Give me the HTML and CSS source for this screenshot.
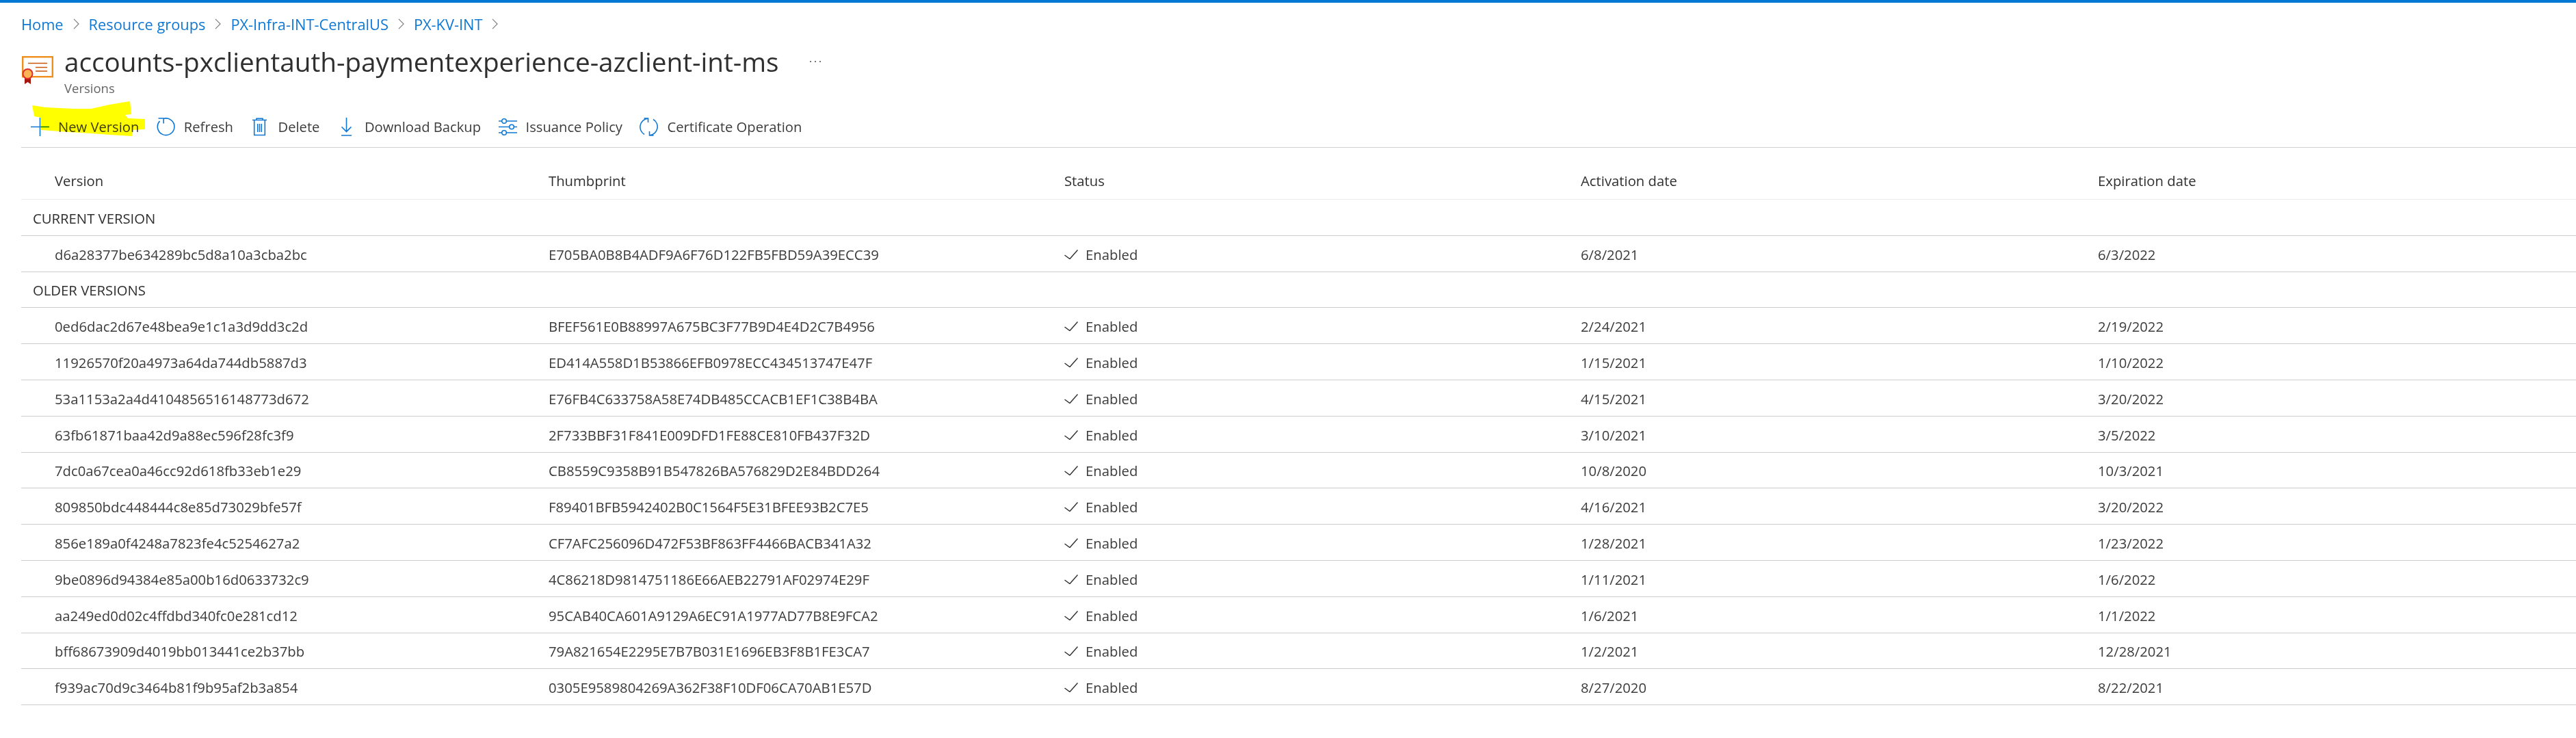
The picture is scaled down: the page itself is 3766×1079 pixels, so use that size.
FILE: index.html
```html
<!DOCTYPE html>
<html lang="en">
<head>
    <meta charset="UTF-8">
    <title>accounts-pxclientauth-paymentexperience-azclient-int-ms - Versions</title>
    <link rel="stylesheet" href="styles.css">
</head>
<body>
    <div class="top-bar"></div>

    <nav class="breadcrumb">
        <a class="crumb">Home</a>
        <svg class="crumb-sep" viewBox="0 0 10 18"><path d="M1 1l8 8-8 8"/></svg>
        <a class="crumb">Resource groups</a>
        <svg class="crumb-sep" viewBox="0 0 10 18"><path d="M1 1l8 8-8 8"/></svg>
        <a class="crumb">PX-Infra-INT-CentralUS</a>
        <svg class="crumb-sep" viewBox="0 0 10 18"><path d="M1 1l8 8-8 8"/></svg>
        <a class="crumb">PX-KV-INT</a>
        <svg class="crumb-sep" viewBox="0 0 10 18"><path d="M1 1l8 8-8 8"/></svg>
    </nav>

    <header class="page-header">
        <svg class="cert-icon" viewBox="0 0 46 42">
            <rect x="1.2" y="1.2" width="43.6" height="29" fill="#fff" stroke="#ee8f1e" stroke-width="2.4"/>
            <path d="M9 10.5h28M20 16.5h17M20 22h17" stroke="#c9560f" stroke-width="1.4" fill="none"/>
            <path d="M4 31v10l4.500-3 4.500 3v-10z" fill="#a8170f"/>
            <circle cx="8.500" cy="26" r="7" fill="#fbb454" stroke="#e0302a" stroke-width="2"/>
        </svg>
        <div class="title-block">
            <div class="title-row">
                <h1 class="page-title">accounts-pxclientauth-paymentexperience-azclient-int-ms</h1>
                <svg class="more-icon" viewBox="0 0 18 4"><circle cx="2" cy="2" r="1.100"/><circle cx="9" cy="2" r="1.100"/><circle cx="16" cy="2" r="1.100"/></svg>
            </div>
            <div class="page-subtitle">Versions</div>
        </div>
    </header>

    <div class="toolbar">
        <div class="tool">
            <svg class="tool-icon" viewBox="0 0 27 27"><path d="M0 13.500h27M13.500 0v27"/></svg>
            <span>New Version</span>
        </div>
        <div class="tool">
            <svg class="tool-icon" viewBox="0 0 27 27"><path d="M10 1.500A12.300 12.300 0 1 1 4.500 5M2.500 1h7.700v7.500"/></svg>
            <span>Refresh</span>
        </div>
        <div class="tool">
            <svg class="tool-icon" viewBox="0 0 27 27"><path d="M3 3.500h21M9 3.500V1.200h9v2.300M5.700 3.500v22h15.600v-22M10.700 9v12M13.500 9v12M16.300 9v12"/></svg>
            <span>Delete</span>
        </div>
        <div class="tool">
            <svg class="tool-icon" viewBox="0 0 27 27"><path d="M13.500 0v20.500M6.500 13.500l7 7 7-7M6 26h15"/></svg>
            <span>Download Backup</span>
        </div>
        <div class="tool">
            <svg class="tool-icon" viewBox="0 0 27 27"><path d="M0 5h4.500M11.500 5H27M0 13.500h15.500M22.500 13.500H27M0 22h4.500M11.500 22H27"/><circle cx="8" cy="5" r="3.300"/><circle cx="19" cy="13.500" r="3.300"/><circle cx="8" cy="22" r="3.300"/></svg>
            <span>Issuance Policy</span>
        </div>
        <div class="tool">
            <svg class="tool-icon" viewBox="0 0 27 27"><path d="M7 24.500A12.500 12.500 0 0 1 12 1.300M6.500 1h6v6M20 2.500A12.500 12.500 0 0 1 15 25.700M20.500 26h-6v-6"/></svg>
            <span>Certificate Operation</span>
        </div>
        <!-- 黄色のマーカー -->
        <svg class="marker" viewBox="0 0 170 55"><polygon points="0,6 20,9 60,11 86,11 113,5 143,0 145,19 136,20 140,25 165,26 165,41 147,42 146,51 113,49 86,47 53,45 13,42 13,24 3,22"/></svg>
    </div>

    <div class="version-table">
        <div class="table-head">
            <div>Version</div><div>Thumbprint</div><div>Status</div><div>Activation date</div><div>Expiration date</div>
        </div>

        <div class="group-row">CURRENT VERSION</div>
        <div class="table-row">
            <div>d6a28377be634289bc5d8a10a3cba2bc</div><div>E705BA0B8B4ADF9A6F76D122FB5FBD59A39ECC39</div>
            <div class="status"><svg class="check" viewBox="0 0 20 14"><path d="M0.500 8l7.500 5.500L19.500 0.500"/></svg>Enabled</div>
            <div>6/8/2021</div><div>6/3/2022</div>
        </div>

        <div class="group-row">OLDER VERSIONS</div>
        <div class="table-row">
            <div>0ed6dac2d67e48bea9e1c1a3d9dd3c2d</div><div>BFEF561E0B88997A675BC3F77B9D4E4D2C7B4956</div>
            <div class="status"><svg class="check" viewBox="0 0 20 14"><path d="M0.500 8l7.500 5.500L19.500 0.500"/></svg>Enabled</div>
            <div>2/24/2021</div><div>2/19/2022</div>
        </div>
        <div class="table-row">
            <div>11926570f20a4973a64da744db5887d3</div><div>ED414A558D1B53866EFB0978ECC434513747E47F</div>
            <div class="status"><svg class="check" viewBox="0 0 20 14"><path d="M0.500 8l7.500 5.500L19.500 0.500"/></svg>Enabled</div>
            <div>1/15/2021</div><div>1/10/2022</div>
        </div>
        <div class="table-row">
            <div>53a1153a2a4d4104856516148773d672</div><div>E76FB4C633758A58E74DB485CCACB1EF1C38B4BA</div>
            <div class="status"><svg class="check" viewBox="0 0 20 14"><path d="M0.500 8l7.500 5.500L19.500 0.500"/></svg>Enabled</div>
            <div>4/15/2021</div><div>3/20/2022</div>
        </div>
        <div class="table-row">
            <div>63fb61871baa42d9a88ec596f28fc3f9</div><div>2F733BBF31F841E009DFD1FE88CE810FB437F32D</div>
            <div class="status"><svg class="check" viewBox="0 0 20 14"><path d="M0.500 8l7.500 5.500L19.500 0.500"/></svg>Enabled</div>
            <div>3/10/2021</div><div>3/5/2022</div>
        </div>
        <div class="table-row">
            <div>7dc0a67cea0a46cc92d618fb33eb1e29</div><div>CB8559C9358B91B547826BA576829D2E84BDD264</div>
            <div class="status"><svg class="check" viewBox="0 0 20 14"><path d="M0.500 8l7.500 5.500L19.500 0.500"/></svg>Enabled</div>
            <div>10/8/2020</div><div>10/3/2021</div>
        </div>
        <div class="table-row">
            <div>809850bdc448444c8e85d73029bfe57f</div><div>F89401BFB5942402B0C1564F5E31BFEE93B2C7E5</div>
            <div class="status"><svg class="check" viewBox="0 0 20 14"><path d="M0.500 8l7.500 5.500L19.500 0.500"/></svg>Enabled</div>
            <div>4/16/2021</div><div>3/20/2022</div>
        </div>
        <div class="table-row">
            <div>856e189a0f4248a7823fe4c5254627a2</div><div>CF7AFC256096D472F53BF863FF4466BACB341A32</div>
            <div class="status"><svg class="check" viewBox="0 0 20 14"><path d="M0.500 8l7.500 5.500L19.500 0.500"/></svg>Enabled</div>
            <div>1/28/2021</div><div>1/23/2022</div>
        </div>
        <div class="table-row">
            <div>9be0896d94384e85a00b16d0633732c9</div><div>4C86218D9814751186E66AEB22791AF02974E29F</div>
            <div class="status"><svg class="check" viewBox="0 0 20 14"><path d="M0.500 8l7.500 5.500L19.500 0.500"/></svg>Enabled</div>
            <div>1/11/2021</div><div>1/6/2022</div>
        </div>
        <div class="table-row">
            <div>aa249ed0d02c4ffdbd340fc0e281cd12</div><div>95CAB40CA601A9129A6EC91A1977AD77B8E9FCA2</div>
            <div class="status"><svg class="check" viewBox="0 0 20 14"><path d="M0.500 8l7.500 5.500L19.500 0.500"/></svg>Enabled</div>
            <div>1/6/2021</div><div>1/1/2022</div>
        </div>
        <div class="table-row">
            <div>bff68673909d4019bb013441ce2b37bb</div><div>79A821654E2295E7B7B031E1696EB3F8B1FE3CA7</div>
            <div class="status"><svg class="check" viewBox="0 0 20 14"><path d="M0.500 8l7.500 5.500L19.500 0.500"/></svg>Enabled</div>
            <div>1/2/2021</div><div>12/28/2021</div>
        </div>
        <div class="table-row">
            <div>f939ac70d9c3464b81f9b95af2b3a854</div><div>0305E9589804269A362F38F10DF06CA70AB1E57D</div>
            <div class="status"><svg class="check" viewBox="0 0 20 14"><path d="M0.500 8l7.500 5.500L19.500 0.500"/></svg>Enabled</div>
            <div>8/27/2020</div><div>8/22/2021</div>
        </div>
    </div>
</body>
</html>
```

FILE: styles.css
```css
body {
    margin: 0;
    background: #fff;
    font-family: "Open Sans", "Noto Sans", sans-serif;
    font-size: 20.3px;
    color: #3b3b3b;
}

.top-bar {
    height: 4px;
    background: #0078d4;
}

/* パンくず */
.breadcrumb {
    display: flex;
    align-items: center;
    gap: 14px;
    height: 62px;
    padding-left: 31px;
}

.crumb {
    color: #0f78d4;
    font-size: 21.8px;
}

.crumb-sep {
    width: 9px;
    height: 16px;
    fill: none;
    stroke: #7d7d7d;
    stroke-width: 1.3;
}

/* タイトル */
.page-header {
    display: flex;
    padding-left: 32px;
}

.cert-icon {
    width: 46px;
    height: 42px;
    margin: 16px 16px 0 0;
}

.title-row {
    display: flex;
    align-items: center;
    height: 48px;
}

.page-title {
    margin: 0;
    font-size: 38.7px;
    font-weight: 500;
    line-height: 48px;
    color: #2f2f2f;
}

.more-icon {
    width: 18px;
    height: 4px;
    margin-left: 45px;
    fill: #555;
}

.page-subtitle {
    height: 28px;
    margin-top: 1px;
    font-size: 18.5px;
    line-height: 28px;
    color: #666;
}

/* ツールバー */
.toolbar {
    position: relative;
    display: flex;
    align-items: flex-end;
    gap: 25.5px;
    height: 73px;
    box-sizing: border-box;
    margin-left: 31px;
    padding: 0 0 16px 14px;
    border-bottom: 1px solid #d0d0d0;
    font-size: 20.2px;
}

.tool {
    display: flex;
    align-items: center;
    gap: 13px;
}

.tool-icon {
    width: 27px;
    height: 27px;
    fill: none;
    stroke: #0f78d4;
    stroke-width: 1.6;
}

.marker {
    position: absolute;
    left: 16px;
    top: 5px;
    width: 170px;
    height: 55px;
    fill: #ffff00;
    mix-blend-mode: multiply;
}

/* 一覧 */
.version-table {
    margin-left: 31px;
}

.table-head,
.table-row {
    display: grid;
    grid-template-columns: 722px 754px 755px 756px 1fr;
    align-items: center;
    box-sizing: border-box;
    padding-left: 49px;
    border-bottom: 1px solid #cdcdcd;
}

.table-head {
    align-items: end;
    height: 76px;
    padding-bottom: 13px;
    line-height: 28px;
    color: #2f2f2f;
    border-bottom-color: #ececec;
}

.table-row,
.group-row {
    height: 52.8px;
    padding-top: 2px;
}

.group-row {
    display: flex;
    align-items: center;
    box-sizing: border-box;
    padding-left: 17px;
    color: #2f2f2f;
    border-bottom: 1px solid #cdcdcd;
}

.status {
    display: flex;
    align-items: center;
    gap: 11px;
}

.check {
    width: 20px;
    height: 14px;
    fill: none;
    stroke: #333;
    stroke-width: 1.5;
}
```
